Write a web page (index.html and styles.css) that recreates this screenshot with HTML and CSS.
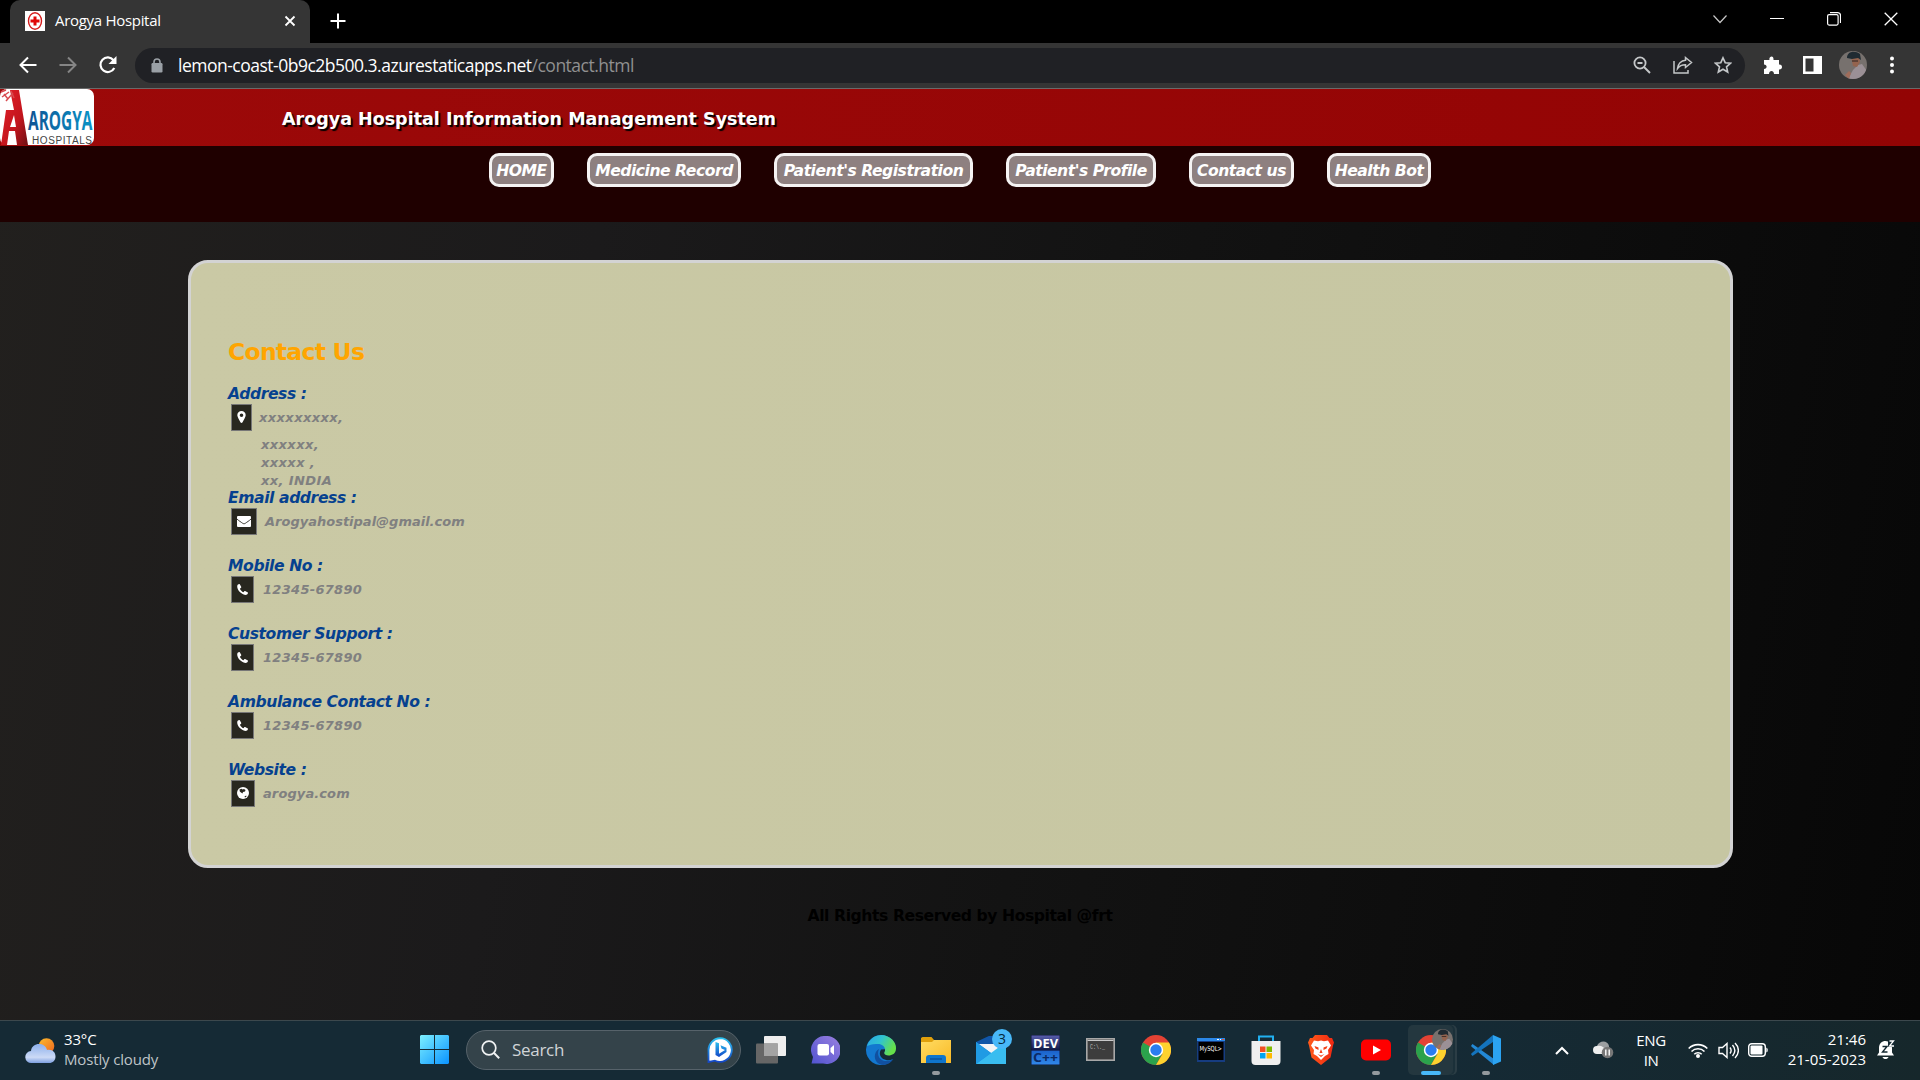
FILE: index.html
```html
<!DOCTYPE html>
<html lang="en">
<head>
<meta charset="utf-8">
<title>Arogya Hospital</title>
<link rel="stylesheet" href="styles.css">
</head>
<body>
<div class="screen">
  <header class="tabstrip">
    <div class="tab">
      <svg class="favicon" width="20" height="20" viewBox="0 0 20 20"><rect width="20" height="20" fill="#fff"/><ellipse cx="10" cy="10" rx="6.500" ry="8.300" fill="none" stroke="#d41a1a" stroke-width="1.400"/><path d="M10 5.500v9M5.500 10h9" stroke="#e00808" stroke-width="3"/></svg>
      <span class="tab-title">Arogya Hospital</span>
      <svg width="12" height="12" viewBox="0 0 12 12"><path d="M1.5 1.5l9 9M10.500 1.500l-9 9" stroke="#fff" stroke-width="1.8"/></svg>
    </div>
    <svg class="newtab" width="16" height="16" viewBox="0 0 16 16"><path d="M8 .5v15M.5 8h15" stroke="#fff" stroke-width="2"/></svg>
    <div class="winctl">
      <svg width="14" height="14" viewBox="0 0 14 14"><path d="M.5 3.500l6.500 7 6.500-7" fill="none" stroke="#c8c8c8" stroke-width="1.200"/></svg>
      <svg width="14" height="14" viewBox="0 0 14 14"><path d="M0 6.500h14" stroke="#fff" stroke-width="1"/></svg>
      <svg width="14" height="14" viewBox="0 0 14 14"><rect x=".6" y="2.600" width="10.500" height="10.500" rx="1.500" fill="none" stroke="#fff" stroke-width="1.200"/><path d="M3 .6h7.500a3 3 0 0 1 3 3V11" fill="none" stroke="#fff" stroke-width="1.200"/></svg>
      <svg width="14" height="14" viewBox="0 0 14 14"><path d="M.7.7l12.600 12.600M13.300.7L.7 13.300" stroke="#fff" stroke-width="1.300"/></svg>
    </div>
  </header>

  <div class="toolbar">
    <div class="navicons">
      <svg width="18" height="18" viewBox="0 0 18 18"><path d="M17.500 9H2M9 1.500L1.500 9 9 16.500" fill="none" stroke="#fff" stroke-width="2"/></svg>
      <svg width="18" height="18" viewBox="0 0 18 18"><path d="M.5 9H16M9 1.500L16.500 9 9 16.500" fill="none" stroke="#858585" stroke-width="2"/></svg>
      <svg width="18" height="18" viewBox="0 0 18 18"><path d="M15.300 12A7.300 7.300 0 1 1 14.500 4.200L16 6" fill="none" stroke="#fff" stroke-width="2.200"/><path d="M17.500 0v8h-8z" fill="#fff"/></svg>
    </div>
    <div class="omnibox">
      <svg width="12" height="15" viewBox="0 0 12 15"><rect x="0.500" y="5" width="11" height="9.500" rx="1.200" fill="#9aa0a6"/><path d="M3 6V4a3 3 0 0 1 6 0v2" fill="none" stroke="#9aa0a6" stroke-width="1.600"/></svg>
      <span class="url">lemon-coast-0b9c2b500.3.azurestaticapps.net<span class="path">/contact.html</span></span>
      <svg width="18" height="18" viewBox="0 0 18 18"><circle cx="7" cy="7" r="5.600" fill="none" stroke="#c4c7c9" stroke-width="1.800"/><path d="M4.500 7h5M11 11l6 6" stroke="#c4c7c9" stroke-width="1.900"/></svg>
      <svg class="share" width="20" height="18" viewBox="0 0 20 18"><path d="M1 5v12h14v-3" fill="none" stroke="#c4c7c9" stroke-width="1.500"/><path d="M12.500 1.500l6 5-6 5V8.700C9 8.700 6.500 9.700 4.500 12.500 5 8 8 4.500 12.500 4.200z" fill="none" stroke="#c4c7c9" stroke-width="1.500"/></svg>
      <svg width="18" height="18" viewBox="0 0 18 18"><path d="M9 1.800l2.200 4.900 5.300.5-4 3.600 1.200 5.200L9 13.200 4.300 16l1.200-5.200-4-3.600 5.300-.5z" fill="none" stroke="#c4c7c9" stroke-width="1.600"/></svg>
    </div>
    <svg class="ext" width="20" height="20" viewBox="0 0 20 20"><path d="M1 5h5.500C5.500 1 10.500 0 10.500 4v1H16v4.500c4-.5 4 5.500 0 5V19h-5c0-4-5-4-5 0H1v-5c3.500 0 3.500-4.500 0-4.500z" fill="#fff"/></svg>
    <svg class="panel" width="19" height="18" viewBox="0 0 19 18"><path d="M0 0h19v18H0zM2.500 2.500v13h8v-13z" fill="#fff" fill-rule="evenodd"/></svg>
    <svg class="avatar" width="28" height="28" viewBox="0 0 28 28"><use href="#person"/></svg>
    <svg width="4" height="18" viewBox="0 0 4 18"><g fill="#fff"><circle cx="2" cy="2.500" r="2"/><circle cx="2" cy="9" r="2"/><circle cx="2" cy="15.500" r="2"/></g></svg>
  </div>

  <main class="site">
    <div class="banner">
      <svg class="logo" width="94" height="57" viewBox="0 0 94 57">
        <defs>
          <linearGradient id="lr" x1="0" y1="0" x2="1" y2="1"><stop offset="0" stop-color="#e32029"/><stop offset=".6" stop-color="#c4151d"/><stop offset="1" stop-color="#6d1013"/></linearGradient>
          <linearGradient id="lb"><stop offset="0" stop-color="#0f5394"/><stop offset="1" stop-color="#0a93c6"/></linearGradient>
        </defs>
        <rect width="94" height="56" rx="7" fill="#fff"/>
        <path d="M1 56L6 21h8L10 1h9l9 55H17l-2-14H9l-2 14z" fill="url(#lr)"/>
        <path d="M10 38l4-12 2 12z" fill="#fff"/>
        <path d="M1 3l5-2M2 8l7-5M6 12l7-8M11 2l3 7M4 5l4 5" stroke="#d84b50" stroke-width="1.500"/>
        <text class="logo-name" x="28" y="41" textLength="64.500" lengthAdjust="spacingAndGlyphs" fill="url(#lb)">AROGYA</text>
        <text class="logo-sub" x="32" y="55" textLength="60">HOSPITALS</text>
      </svg>
      <h1 class="title">Arogya Hospital Information Management System</h1>
    </div>
    <nav class="menu">
      <a class="w1">HOME</a><a class="w2">Medicine Record</a><a class="w3">Patient's Registration</a><a class="w4">Patient's Profile</a><a class="w5">Contact us</a><a class="w6">Health Bot</a>
    </nav>
    <section class="card">
      <h2>Contact Us</h2>
      <h3>Address :</h3>
      <div class="row"><span class="ico pin"><svg width="9" height="12" viewBox="0 0 9 12"><path d="M4.500 0a4.200 4.200 0 0 1 4.200 4.300C8.700 6 6.500 9.500 5.400 11.500c-.4.600-1.400.6-1.800 0C2.500 9.500.3 6 .3 4.300A4.200 4.200 0 0 1 4.500 0zm0 2.500a1.800 1.800 0 1 0 0 3.600 1.800 1.800 0 0 0 0-3.600z" fill="#fff" fill-rule="evenodd"/></svg></span><span class="val addr">xxxxxxxxx,</span></div>
      <p class="lines addr">xxxxxx,<br>xxxxx ,<br>xx, INDIA</p>
      <h3>Email address :</h3>
      <div class="row"><span class="ico mail"><svg width="14" height="11" viewBox="0 0 14 11"><rect width="14" height="11" rx="1" fill="#fff"/><path d="M0 3c2 2 4 3 5.500 4.200 1 .7 2 .7 3 0C10 6 12 5 14 3" fill="none" stroke="#28271f" stroke-width=".9"/></svg></span><span class="val">Arogyahostipal@gmail.com</span></div>
      <h3>Mobile No :</h3>
      <div class="row"><span class="ico tel"><svg width="11" height="11" viewBox="0 0 11 11"><use href="#phone"/></svg></span><span class="val num">12345-67890</span></div>
      <h3>Customer Support :</h3>
      <div class="row"><span class="ico tel"><svg width="11" height="11" viewBox="0 0 11 11"><use href="#phone"/></svg></span><span class="val num">12345-67890</span></div>
      <h3>Ambulance Contact No :</h3>
      <div class="row"><span class="ico tel"><svg width="11" height="11" viewBox="0 0 11 11"><use href="#phone"/></svg></span><span class="val num">12345-67890</span></div>
      <h3>Website :</h3>
      <div class="row"><span class="ico web"><svg width="12" height="12" viewBox="0 0 12 12"><circle cx="6" cy="6" r="6" fill="#fff"/><path d="M2.500 2.500l2-.8 1 .8 1.500-.5 1.500 1-.5 1.600-2 .4-.5 1.500-1.500-1L2.800 4.500zM7.500 9.500l1.700-1 .3 1L8 10.500z" fill="#28271f"/></svg></span><span class="val webname">arogya.com</span></div>
    </section>
    <footer class="rights">All Rights Reserved by Hospital @frt</footer>
  </main>

  <div class="taskbar">
    <div class="weather">
      <svg width="31" height="26" viewBox="0 0 31 26"><defs><linearGradient id="sun" x1="0" y1="0" x2="1" y2="1"><stop offset="0" stop-color="#fbbd2c"/><stop offset="1" stop-color="#f0641e"/></linearGradient><linearGradient id="cl" x1="0" y1="0" x2="0" y2="1"><stop offset="0" stop-color="#8db0ec"/><stop offset=".7" stop-color="#ccdaf6"/><stop offset="1" stop-color="#7d9fe0"/></linearGradient></defs><circle cx="21.500" cy="8" r="7.800" fill="url(#sun)"/><path d="M6.500 25a6 6 0 0 1-.5-12C7 4 20 4 22 12c5-1 8.500 2 8.500 6.500 0 4-2.500 6.500-6.500 6.500z" fill="url(#cl)"/></svg>
      <div class="wtext"><span class="temp">33°C</span><span class="cond">Mostly cloudy</span></div>
    </div>
    <div class="apps">
      <div class="app start"><svg width="29" height="29" viewBox="0 0 29 29"><defs><linearGradient id="win" x1="0" y1="0" x2="1" y2="1"><stop offset="0" stop-color="#7df0ff"/><stop offset="1" stop-color="#0a93ff"/></linearGradient></defs><path d="M1 0h13v14H0V1zM15 0h13l1 1v13H15zM0 15h14v14H1l-1-1zM15 15h14v13l-1 1H15z" fill="url(#win)"/></svg></div>
      <div class="search">
        <svg width="19" height="19" viewBox="0 0 19 19"><circle cx="8" cy="8" r="6.800" fill="none" stroke="#f0f2f3" stroke-width="1.700"/><path d="M12.800 12.800l5.400 5.400" stroke="#f0f2f3" stroke-width="2"/></svg>
        <span class="stext">Search</span>
        <svg class="bing" width="26" height="26" viewBox="0 0 26 26"><defs><linearGradient id="bg1" x1="0" y1="0" x2="0" y2="1"><stop offset="0" stop-color="#2bc0ee"/><stop offset="1" stop-color="#1447c8"/></linearGradient></defs><path d="M13 1.200a11.800 11.800 0 1 1-5 22.500L1.500 25V13A11.800 11.800 0 0 1 13 1.200z" fill="#fff" stroke="url(#bg1)" stroke-width="1.800"/><path d="M8.500 5l3.500 1.300v10.500l6-3.800-3.500-1.500-1-3.200 6 2.500v4.200L12 20l-3.500-2z" fill="url(#bg1)"/></svg>
      </div>
      <div class="app"><svg width="30" height="28" viewBox="0 0 30 28"><rect x="8" width="22" height="20" rx="1" fill="#eee"/><rect y="7.500" width="22" height="20" rx="1" fill="#666"/><rect x="8" y="7.500" width="14" height="12.500" fill="#a3a3a3"/></svg></div>
      <div class="app"><svg width="29" height="28" viewBox="0 0 29 28"><defs><linearGradient id="ch" x1="1" y1="0" x2="0" y2="1"><stop offset="0" stop-color="#9a80e0"/><stop offset="1" stop-color="#5053cf"/></linearGradient></defs><path d="M15 0a14 14 0 1 1-3 27.500H.5L2 21A14 14 0 0 1 15 0z" fill="url(#ch)"/><rect x="6.500" y="8" width="11.500" height="11.500" rx="2" fill="#fff"/><path d="M19.500 12l3.500-3v10l-3.500-3z" fill="#fff"/></svg></div>
      <div class="app"><svg width="30" height="30" viewBox="0 0 30 30"><defs><linearGradient id="e1" x1="0" y1="0" x2="1" y2=".4"><stop offset="0" stop-color="#2aa6e6"/><stop offset=".5" stop-color="#30c3d0"/><stop offset="1" stop-color="#66e04a"/></linearGradient></defs><path d="M15 0a15 15 0 1 0 12 24c-2 1-4 1.500-6 1.200-6-.7-9-6-6-10.700L30 13.500A15 15 0 0 0 15 0z" fill="#1378cf"/><path d="M1 11C4 2 13-2 21 1.200c6 2.300 9 7.300 9 12.300 0 5-4 7-7.500 7-3 0-5-1.500-4-3.500C20.500 13 17 9 12 9 7 8.500 3 10 1 11z" fill="url(#e1)"/><path d="M13 14c-3 7 1.500 13 9 12 2-.2 4-1 5.500-2C23 31 14 32 10 26c-2.500-4-1-10 3-12z" fill="#1150a0"/></svg></div>
      <div class="app run"><svg width="30" height="28" viewBox="0 0 30 28"><defs><linearGradient id="fo" x1="0" y1="0" x2="1" y2="1"><stop offset="0" stop-color="#ffdc63"/><stop offset="1" stop-color="#f9ba26"/></linearGradient></defs><path d="M1.500 1h9l2.500 3h17v8H0V2z" fill="#dfa00c"/><path d="M0 6h11l2-2h17v23H0z" fill="url(#fo)"/><path d="M5 27v-5q0-3 3-3h14q3 0 3 3v5z" fill="#0f75cc"/><path d="M9 23h12" stroke="#0a4a92" stroke-width="1.200"/></svg></div>
      <div class="app"><svg width="30" height="28" viewBox="0 0 30 28"><path d="M0 6L15-1l15 7v14H0z" fill="#1056a8"/><path d="M3 8h24v14H3z" fill="#f2f4f6"/><path d="M0 6l30 22H0z" fill="#1d8be0"/><path d="M30 6v22H0z" fill="#39bdf0"/><path d="M0 6l15 11L0 28z" fill="#209be4"/></svg><span class="badge">3</span></div>
      <div class="app"><svg width="29" height="30" viewBox="0 0 29 30"><defs><linearGradient id="dv" x1="0" y1="0" x2="0" y2="1"><stop offset="0" stop-color="#5a60b0"/><stop offset=".5" stop-color="#101846"/><stop offset=".55" stop-color="#1c64cc"/><stop offset="1" stop-color="#3189ea"/></linearGradient></defs><rect width="29" height="30" fill="url(#dv)" stroke="#10163a"/><text x="2" y="12.500" class="dev" textLength="25" lengthAdjust="spacingAndGlyphs" fill="#fff">DEV</text><text x="2" y="27" class="dev" textLength="25" lengthAdjust="spacingAndGlyphs" fill="#0b2a66">C++</text></svg></div>
      <div class="app"><svg width="29" height="23" viewBox="0 0 29 23"><rect x=".8" y=".8" width="27.400" height="21.400" fill="#3d3d3d" stroke="#a8a8a8" stroke-width="1.600"/><path d="M1.500 2.500h26" stroke="#c9c9c9"/><text x="4" y="11" class="cmd" textLength="15" lengthAdjust="spacingAndGlyphs">C:\._</text></svg></div>
      <div class="app"><svg width="30" height="30" viewBox="0 0 30 30"><use href="#chrome"/></svg></div>
      <div class="app"><svg width="28" height="24" viewBox="0 0 28 24"><rect width="28" height="24" fill="#163c80"/><rect x="0" y="0" width="28" height="3" fill="#2b88e8"/><path d="M20 1.500h2M23 1.500h1" stroke="#fff"/><path d="M25 1.500h2" stroke="#e05030"/><rect x="1.500" y="4" width="25" height="18" fill="#000"/><text x="2.500" y="13" class="sql" textLength="22.500" lengthAdjust="spacingAndGlyphs">MySQL&gt;</text></svg></div>
      <div class="app"><svg width="30" height="30" viewBox="0 0 30 30"><path d="M8 7V1.500h14V7" fill="none" stroke="#21b0f0" stroke-width="2"/><path d="M.5 6h29v20q0 4-4 4h-21q-4 0-4-4z" fill="#efefef"/><path d="M9 11.500h5.500V17H9z" fill="#f25022"/><path d="M15.500 11.500H21V17h-5.500z" fill="#7fba00"/><path d="M9 18h5.500v5.500H9z" fill="#00a4ef"/><path d="M15.500 18H21v5.500h-5.500z" fill="#ffb900"/></svg></div>
      <div class="app"><svg width="26" height="30" viewBox="0 0 26 30"><defs><linearGradient id="br"><stop offset="0" stop-color="#ff5a1a"/><stop offset="1" stop-color="#f02812"/></linearGradient></defs><path d="M7 0h12l2.500 3L24 3l2 4.500-1 3-2.500 12-9.500 7.500-9.500-7.500L1 10.500 0 7.500 2 3l2.500 0z" fill="url(#br)"/><path d="M6 5.500l4 .8 3-.8 3 .8 4-.8 3 5-3 4.500.5 4-3.500 2L13 25l-4-4-3.500-2L6 15l-3-4.500z" fill="#fff"/><path d="M6.500 11l4 1.500v2.500l-3-1.500zM19.500 11l-4 1.500v2.500l3-1.500zM13 14l1.500 4H11.500zM9.500 19l3.500 1.500L16.500 19 13 22z" fill="#f24018"/></svg></div>
      <div class="app run"><svg width="30" height="22" viewBox="0 0 30 22"><rect width="30" height="21" y=".5" rx="5" fill="#f00"/><path d="M12 6.500l8 4.500-8 4.500z" fill="#fff"/></svg></div>
      <div class="app active"><svg width="30" height="30" viewBox="0 0 30 30"><use href="#chrome"/></svg><svg class="mini" width="21" height="21" viewBox="0 0 28 28"><use href="#person"/></svg></div>
      <div class="app run"><svg width="30" height="30" viewBox="0 0 30 30"><path d="M1.500 9L23 24v6L.3 11.500v-1z" fill="#2389d6"/><path d="M1.500 21L22 7V0L.3 18.500v1z" fill="#1474bd"/><path d="M22 0l8 3.500v23L22 30z" fill="#2ba3f2"/></svg></div>
    </div>
    <div class="tray">
      <svg width="14" height="9" viewBox="0 0 14 9"><path d="M1 8l6-6 6 6" fill="none" stroke="#fff" stroke-width="2"/></svg>
      <svg class="cloud" width="21" height="18" viewBox="0 0 21 18"><path d="M4 12.500a4 4 0 0 1 0-7.500C6-1 15-1 16 5v7.500z" fill="#9c9fa1"/><path d="M4 13a4 4 0 0 1 0-8c4-1 7 1 8.500 4l-1 4z" fill="#eee"/><circle cx="14.500" cy="11.500" r="5.800" fill="#777"/><path d="M12.800 8.500v6M16.200 8.500v6" stroke="#fff" stroke-width="1.400"/></svg>
      <div class="lang"><span>ENG</span><span>IN</span></div>
      <svg width="20" height="15" viewBox="0 0 20 15"><g fill="none" stroke="#fff" stroke-width="1.600"><path d="M.7 5.500a13 13 0 0 1 18.600 0"/><path d="M3.500 8.500a9.200 9.200 0 0 1 13 0"/><path d="M6.300 11.300a5.200 5.200 0 0 1 7.400 0"/></g><circle cx="10" cy="13" r="2" fill="#fff"/></svg>
      <svg class="vol" width="21" height="17" viewBox="0 0 21 17"><g fill="none" stroke="#fff" stroke-width="1.400"><path d="M1 5.500h3.500L9 1.500v14l-4.500-4H1z"/><path d="M12 5.500c1.500 2 1.500 4 0 6M14.500 3c3 3.500 3 7.500 0 11M17 1c4.500 4.500 4.500 10.500 0 15"/></g></svg>
      <svg class="bat" width="20" height="14" viewBox="0 0 20 14"><rect x=".7" y=".7" width="16.600" height="12.600" rx="3" fill="none" stroke="#fff" stroke-width="1.400"/><rect x="2.500" y="2.500" width="12" height="9" rx="1" fill="#fff"/><path d="M18.300 4.500q1.500.5 1.500 2.500t-1.500 2.500z" fill="#fff"/></svg>
      <div class="clock"><span>21:46</span><span>21-05-2023</span></div>
      <svg class="bell" width="18" height="20" viewBox="0 0 18 20"><path d="M0 15.500l2-3V8c0-4.500 3-7 6.500-7s6.500 3 6.500 7v4.500l2 3zM5.500 17h6c-1 2.800-5 2.800-6 0z" fill="#fff"/><path d="M11 0h7v7h-7z" fill="#142831"/><path d="M12.500 1h4l-4 5h4.500" fill="none" stroke="#fff" stroke-width="1.300"/><path d="M5.500 6.500h4.500L5.500 12h5" fill="none" stroke="#142831" stroke-width="1.400"/></svg>
    </div>
  </div>
</div>
<svg class="defs" width="0" height="0">
  <symbol id="phone" viewBox="0 0 11 11"><path d="M.2 2C.4.800 1.300.3 2.300.1l.5.100 1.500 2.900-.2.600-1.200 1c.8 1.700 1.800 2.700 3.600 3.600l1-1.300.6-.1 2.800 1.500.1.600C10.800 10.200 9.700 10.900 8.400 10.900 4 10.300 0 6 .2 2z" fill="#fff"/></symbol>
  <symbol id="chrome" viewBox="0 0 30 30"><circle cx="15" cy="15" r="15" fill="#e34234"/><path d="M2 7.500A15 15 0 0 0 15 30l6.500-11.500L15 15z" fill="#2ba24c"/><path d="M15 30A15 15 0 0 0 28 7.500H15L21.500 19z" fill="#fdd22e"/><circle cx="15" cy="15" r="7.200" fill="#fff"/><circle cx="15" cy="15" r="5.700" fill="#2a7df0"/></symbol>
  <symbol id="person" viewBox="0 0 28 28"><clipPath id="pc"><circle cx="14" cy="14" r="14"/></clipPath><g clip-path="url(#pc)"><rect width="28" height="28" fill="#77716e"/><path d="M9 28l5-9 5-5 4-1 5 7v8z" fill="#9b9096"/><path d="M12 6l8-1 1 6-3 5-4-1z" fill="#94634e"/><path d="M8 7C8 0 16-1 21 3l1 6-3-2-6 1z" fill="#202b32"/><path d="M6 24l4-4 2 2-2 6z" fill="#a06d5b"/><path d="M13 10h6" stroke="#2a2220"/></g></symbol>
</svg>
</body>
</html>
```
FILE: styles.css
```css
* { box-sizing: border-box; }
body { margin: 0; background: #000; }
svg { display: block; flex: none; }
.defs { position: absolute; }
.screen { width: 1920px; height: 1080px; display: flex; flex-direction: column; overflow: hidden; font-family: "Open Sans", "Noto Sans", sans-serif; }

/* browser chrome */
.tabstrip { height: 43px; background: #000; display: flex; align-items: flex-start; padding-left: 10px; }
.tab { width: 300px; height: 43px; background: #353535; border-radius: 10px 10px 0 0; display: flex; align-items: center; padding: 0 14px 2px 15px; }
.tab-title { margin: -2px 0 0 10px; flex: 1; color: #fff; font-size: 15px; letter-spacing: -0.300px; white-space: nowrap; }
.newtab { margin: 13px 0 0 20px; }
.winctl { margin-left: auto; display: flex; gap: 43px; padding: 12px 22px 0 0; }
.toolbar { height: 46px; background: #353535; border-bottom: 1px solid #6a6a6a; display: flex; align-items: center; padding: 0 25px 1px 19px; }
.navicons { display: flex; gap: 22px; width: 116px; }
.omnibox { width: 1610px; height: 35px; border-radius: 18px; background: #202125; display: flex; align-items: center; padding: 0 13px 0 16px; }
.url { margin-left: 15px; flex: 1; font-size: 17.500px; letter-spacing: -0.500px; color: #fff; white-space: nowrap; }
.path { color: #909090; }
.share { margin: 0 21px 0 22px; }
.ext { margin-left: 18px; }
.panel { margin-left: 20px; }
.avatar { margin: 0 23px 0 17px; }

/* hospital page */
.site { height: 931px; display: flex; flex-direction: column; font-family: Verdana, "DejaVu Sans", sans-serif; font-weight: bold; background: linear-gradient(100deg, #22201e, #1b1a1b 30%, #131313 55%, #0b0b0b 85%, #070707); }
.banner { height: 57px; background: linear-gradient(90deg, #9c0909, #930404); display: flex; align-items: center; }
.logo-name { font: bold 27px "Open Sans", sans-serif; }
.logo-sub { font: 10px "Liberation Sans", sans-serif; fill: #444; }
.title { margin: 2px 0 0 188px; font-size: 17.500px; color: #fff; text-shadow: 2px 2px 1px #000; white-space: nowrap; }
.menu { height: 76px; background: #1f0000; display: flex; justify-content: center; gap: 33px; padding-top: 7px; }
.menu a { height: 34px; border: 3px solid #f5f3f3; border-radius: 10px; background: #8e8080; color: #fff; font-size: 15.600px; letter-spacing: -0.480px; font-style: italic; line-height: 30px; text-align: center; white-space: nowrap; }
.w1 { width: 65px; }
.w2 { width: 154px; }
.w3 { width: 199px; }
.w4 { width: 150px; }
.w5 { width: 105px; }
.w6 { width: 104px; }
.card { width: 1545px; height: 608px; margin: 38px 0 0 188px; border: 3px solid #d3d3d3; border-radius: 20px; background: linear-gradient(90deg, #cac9a5, #c6c6a2); padding: 74px 37px 0; }
.card h2 { margin: 0 0 18px; height: 30px; line-height: 30px; font-size: 23.500px; letter-spacing: -0.750px; color: orange; }
.card h3 { margin: 0; height: 19px; line-height: 19px; font-size: 15.600px; letter-spacing: -0.420px; font-style: italic; color: #06418f; white-space: nowrap; }
.row { display: flex; align-items: center; height: 27px; margin: 0 0 22px 3px; font-size: 13px; font-style: italic; color: #808080; }
.ico { height: 27px; display: flex; align-items: center; justify-content: center; background: #28271f; border: 1px solid #777; padding-bottom: 1px; }
.pin { width: 21px; margin-right: 7px; }
.mail { width: 26px; margin-right: 8px; }
.tel { width: 23px; margin-right: 9px; }
.web { width: 24px; margin-right: 8px; }
.num { letter-spacing: 0.300px; }
.webname { letter-spacing: 0.100px; }
.lines { margin: -17px 0 -1px 33px; line-height: 18px; font-size: 13px; font-style: italic; color: #808080; }
.addr { letter-spacing: 0.400px; }
.rights { margin-top: 38px; text-align: center; font-size: 15.600px; letter-spacing: -0.420px; line-height: 20px; color: #000; }

/* taskbar */
.taskbar { height: 60px; background: linear-gradient(90deg, #152a35, #152a35 75%, #16272b); border-top: 1px solid #3c484d; display: flex; color: #fff; }
.weather { width: 409px; padding: 0 0 0 25px; display: flex; align-items: center; }
.wtext { margin: -4px 0 0 8px; display: flex; flex-direction: column; font-size: 15px; line-height: 20px; letter-spacing: -0.150px; }
.cond { color: #bfc4c8; }
.apps { display: flex; align-items: center; padding-bottom: 2px; }
.app { width: 55px; height: 50px; display: flex; align-items: center; justify-content: center; position: relative; }
.start { width: 50px; margin-right: 7px; }
.search { width: 275px; height: 40px; margin-right: 2px; border: 1px solid #56626a; border-radius: 20px; background: #34434a; display: flex; align-items: center; padding: 0 7px 0 14px; }
.stext { margin-left: 12px; flex: 1; font-size: 17px; letter-spacing: -0.300px; color: #d0d4d7; }
.run::after { content: ""; position: absolute; left: 24px; bottom: 0; width: 8px; height: 4px; border-radius: 2px; background: #93999d; }
.badge { position: absolute; left: 29px; top: 4px; width: 20px; height: 20px; border-radius: 50%; background: #48b8f8; color: #06293c; font-size: 14px; line-height: 20px; text-align: center; }
.active { background: #24373f; border-radius: 5px; width: 45px; margin: 0 5px; box-shadow: 2px 0 0 #1b3039, 4px 0 0 #2b3d45; }
.active::after { content: ""; position: absolute; left: 13px; bottom: 0; width: 20px; height: 4px; border-radius: 2px; background: #48b8f8; }
.mini { position: absolute; left: 24px; top: 4px; }
.dev { font: bold 12.500px "Open Sans", sans-serif; }
.cmd { font: 7px "Liberation Mono", monospace; fill: #bbb; }
.sql { font: 7px "DejaVu Sans", sans-serif; fill: #fff; }
.tray { margin-left: auto; display: flex; align-items: center; font-size: 15px; line-height: 20px; letter-spacing: -0.400px; padding: 0 25px 1px 0; }
.cloud { margin-left: 24px; }
.lang { width: 30px; margin: 0 22px 0 22px; display: flex; flex-direction: column; align-items: center; }
.vol { margin-left: 10px; }
.bat { margin-left: 9px; }
.clock { width: 98px; margin-top: -3px; display: flex; flex-direction: column; align-items: flex-end; white-space: nowrap; letter-spacing: 0; }
.bell { margin-left: 11px; }
```
